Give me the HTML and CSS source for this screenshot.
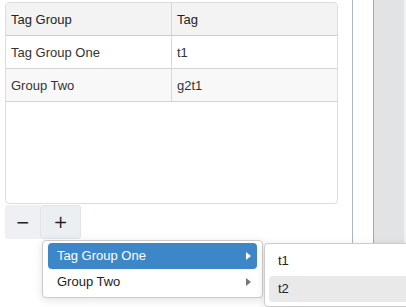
FILE: index.html
```html
<!DOCTYPE html>
<html lang="en">
<head>
    <meta charset="UTF-8">
    <title>Tag Groups</title>
    <link rel="stylesheet" href="styles.css">
</head>
<body>
    <div class="page">
        <div class="main">
            <div class="grid">
                <table>
                    <tr class="head">
                        <th class="col-group">Tag Group</th>
                        <th>Tag</th>
                    </tr>
                    <tr>
                        <td class="col-group">Tag Group One</td>
                        <td>t1</td>
                    </tr>
                    <tr class="alt">
                        <td class="col-group">Group Two</td>
                        <td>g2t1</td>
                    </tr>
                </table>
            </div>
            <div class="buttons">
                <button class="btn btn-minus">&minus;</button>
                <button class="btn btn-plus">+</button>
            </div>
        </div>
        <div class="side">
            <div class="strip"></div>
            <div class="panel"></div>
            <div class="edge"></div>
        </div>
    </div>

    <div class="menu">
        <div class="menu-item active">Tag Group One <span class="arrow"></span></div>
        <div class="menu-item">Group Two <span class="arrow"></span></div>
    </div>

    <div class="submenu">
        <div class="sub-item">t1</div>
        <div class="sub-item hover">t2</div>
    </div>
</body>
</html>
```

FILE: styles.css
```css
body {
    margin: 0;
    font-family: 'Liberation Sans', Arial, sans-serif;
    font-size: 13px;
    color: #333;
    background: #fff;
}
.page {
    display: flex;
    height: 307px;
    overflow: hidden;
}
.main {
    width: 333px;
    padding: 2px 0 0 5px;
}
.grid {
    height: 200px;
    border: 1px solid #ddd;
    border-radius: 4px;
    overflow: hidden;
}
table {
    width: 100%;
    border-collapse: collapse;
}
th, td {
    text-align: left;
    font-weight: normal;
    padding: 0 0 0 5px;
    height: 32px;
    border-bottom: 1px solid #d4d4d4;
}
.head th {
    background: #f3f3f3;
    color: #222;
    border-bottom: 1px solid #ccc;
}
.alt td {
    background: #f8f8f8;
}
.col-group {
    width: 160px;
    border-right: 1px solid #d8d8d8;
}
.buttons {
    display: flex;
    margin-top: 1px;
}
.btn {
    height: 34px;
    border: none;
    background: #eef0f3;
    color: #222;
    font-family: 'DejaVu Sans', sans-serif;
    font-size: 17px;
    padding: 0;
    cursor: pointer;
}
.btn-minus {
    width: 35px;
    border-radius: 3px 0 0 3px;
}
.btn-plus {
    width: 41px;
    border: 1px solid #e0e3e7;
    border-radius: 3px;
    background: #eceff2;
}
.side {
    display: flex;
    margin-left: 14px;
    flex: 1;
}
.strip {
    width: 20px;
    border-left: 1px solid #a7b9c5;
    border-right: 1px solid #a3a8ad;
}
.panel {
    width: 30px;
    background: #e2e3e5;
}
.edge {
    flex: 1;
    background: #f1f1f1;
}
.menu {
    position: absolute;
    left: 42px;
    top: 240px;
    width: 209px;
    padding: 2px 5px;
    background: #fff;
    border: 1px solid #ccc;
    border-radius: 4px;
    box-shadow: 0 2px 8px rgba(0, 0, 0, 0.12);
}
.menu-item {
    position: relative;
    height: 26px;
    line-height: 26px;
    padding-left: 9px;
    color: #222;
    border-radius: 4px;
}
.menu-item.active {
    background: #3d86c7;
    color: #fff;
}
.arrow {
    position: absolute;
    right: 6px;
    top: 9px;
    border-top: 4px solid transparent;
    border-bottom: 4px solid transparent;
    border-left: 5px solid #777;
}
.active .arrow {
    border-left-color: #fff;
}
.submenu {
    position: absolute;
    left: 264px;
    top: 243px;
    width: 150px;
    height: 54px;
    padding: 4px 0 4px 4px;
    background: #fff;
    border: 1px solid #ccc;
    border-radius: 4px;
    box-shadow: 0 2px 8px rgba(0, 0, 0, 0.12);
}
.sub-item {
    height: 26px;
    line-height: 26px;
    padding-left: 9px;
    color: #222;
    border-radius: 4px;
}
.sub-item.hover {
    background: #e9e9e9;
    margin-top: 2px;
}
```
